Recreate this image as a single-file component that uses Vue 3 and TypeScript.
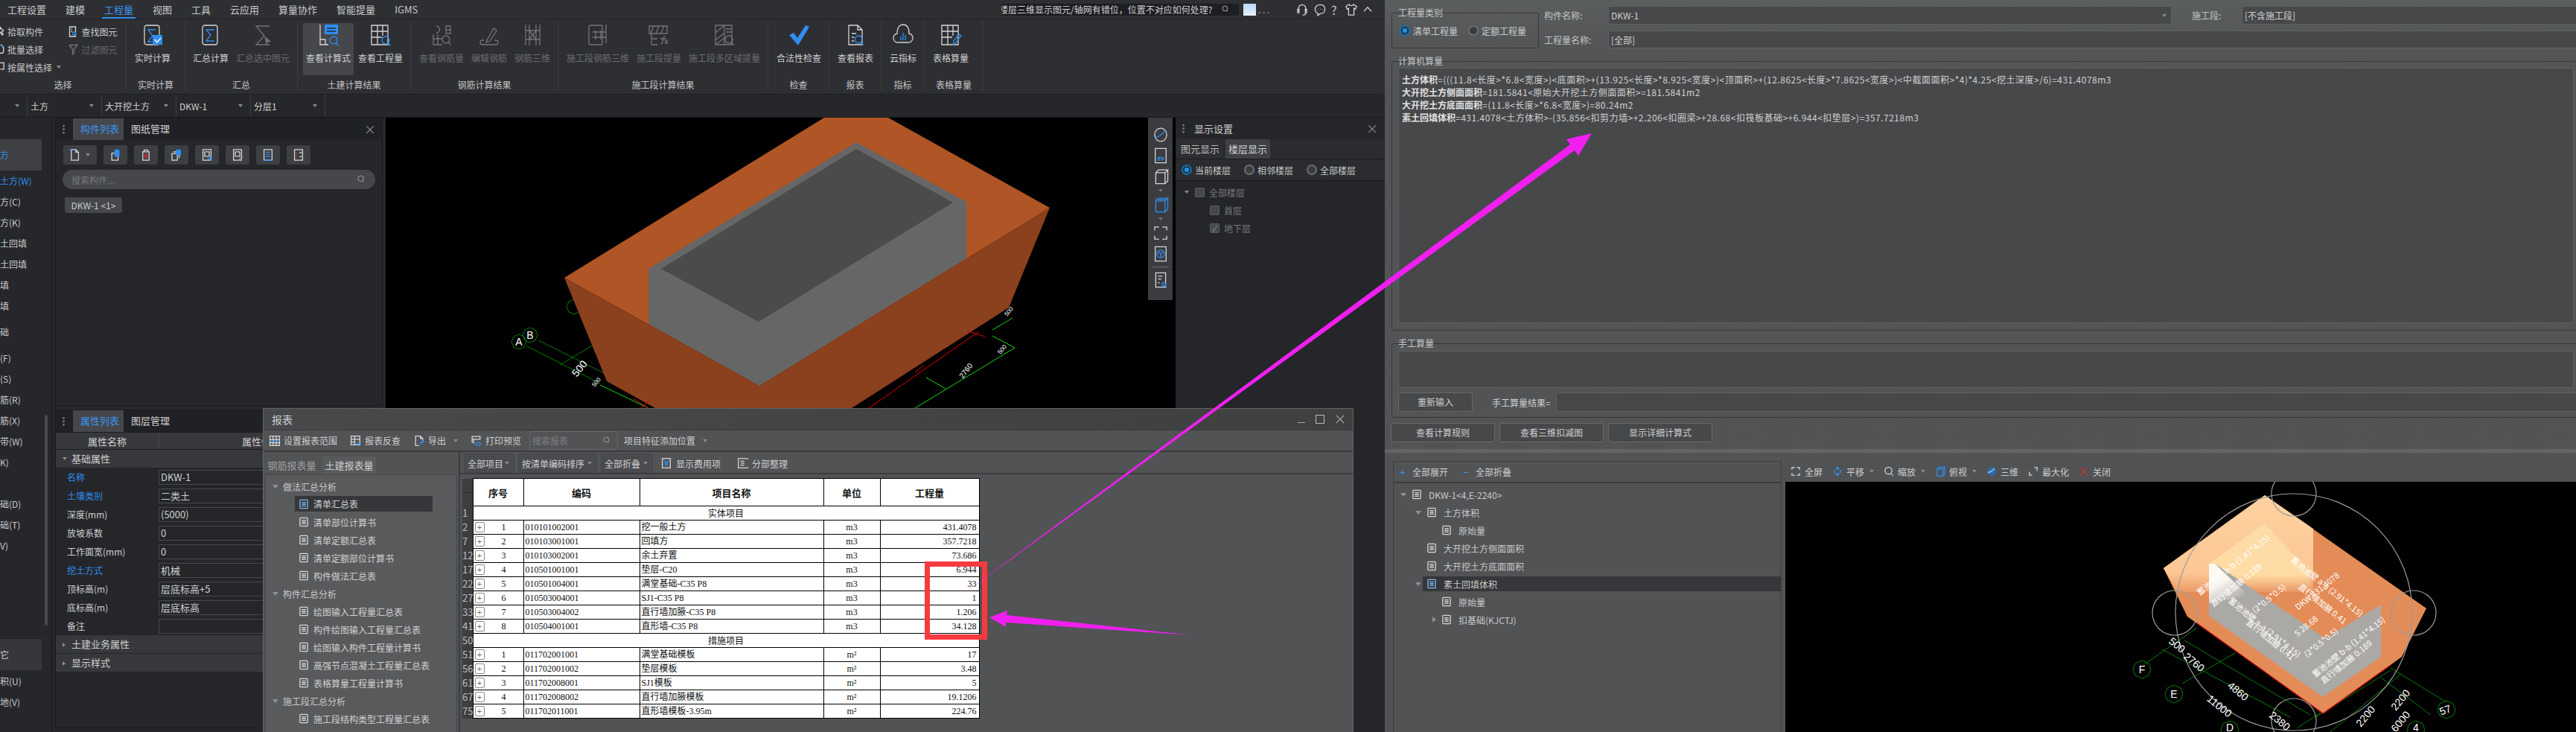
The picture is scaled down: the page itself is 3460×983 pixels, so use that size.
<template>
  <div class="page">
    <div class="app">
      <div class="menu">
        <span v-for="m in menus" :key="m" class="menu-item" :class="{ on: m === '工程量' }">{{ m }}</span>
        <div class="menu-right">
          <div class="q-search"><span>楼层三维显示图元/轴网有错位，位置不对应如何处理?</span><Ico n="search" :s="11" /></div>
          <i class="avatar"></i><span class="dots">. . .</span>
          <Ico n="headset" :s="18" /><Ico n="chat" :s="18" /><span class="help">?</span><Ico n="shirt" :s="18" /><Ico n="up" :s="14" />
        </div>
      </div>

      <div class="ribbon">
        <div class="group sel-group">
          <div class="sel-btns">
            <div class="sel-col">
              <div class="sm"><Ico class="clip" n="pick" :s="14" /><span>拾取构件</span></div>
              <div class="sm"><Ico class="clip" n="batch" :s="14" /><span>批量选择</span></div>
              <div class="sm"><Ico class="clip" n="attr" :s="14" /><span>按属性选择</span><i class="caret"></i></div>
            </div>
            <div class="sel-col second">
              <div class="sm"><Ico n="find" :s="15" /><span>查找图元</span></div>
              <div class="sm off"><Ico n="filter" :s="15" /><span>过滤图元</span></div>
            </div>
          </div>
          <div class="group-label">选择</div>
        </div>
        <div v-for="g in groups" :key="g.label" class="group" :style="{ width: g.w + 'px' }">
          <div class="btns" :style="{ paddingLeft: g.pad + 'px' }">
            <div v-for="b in g.items" :key="b.t" class="big" :class="{ off: b.off, active: b.active }" :style="{ width: b.w + 'px' }">
              <Ico :n="b.i" :s="30" />
              <span>{{ b.t }}</span>
            </div>
          </div>
          <div class="group-label">{{ g.label }}</div>
        </div>
      </div>

      <div class="subbar">
        <div class="drop first"><i class="caret"></i></div>
        <div class="drop"><span>土方</span><i class="caret"></i></div>
        <div class="drop"><span>大开挖土方</span><i class="caret"></i></div>
        <div class="drop"><span>DKW-1</span><i class="caret"></i></div>
        <div class="drop"><span>分层1</span><i class="caret"></i></div>
      </div>

      <div class="work">
        <div class="nav">
          <div v-for="(n, i) in navItems" :key="i" class="nav-row" :class="n.c">{{ n.t }}</div>
          <i class="nav-scroll"></i>
        </div>

        <div class="mid">
          <div class="panel list-panel">
            <div class="tabs">
              <i class="grip"></i>
              <span class="tab on">构件列表</span><span class="tab">图纸管理</span>
              <span class="close">×</span>
            </div>
            <div class="tools">
              <div class="tool wide"><Ico n="newdoc" :s="18" /><i class="caret"></i></div>
              <div v-for="t in listTools" :key="t" class="tool"><Ico :n="t" :s="18" /></div>
            </div>
            <div class="list-search"><span>搜索构件...</span><Ico n="search" :s="12" /></div>
            <div class="chip">DKW-1 &lt;1&gt;</div>
          </div>
          <div class="panel prop-panel">
            <div class="tabs">
              <i class="grip"></i>
              <span class="tab on">属性列表</span><span class="tab">图层管理</span>
            </div>
            <div class="prop-head"><span class="prop-name">属性名称</span><span class="prop-val">属性值</span></div>
            <div class="prop-sec"><i class="caret"></i>基础属性</div>
            <div v-for="p in props" :key="p.k" class="prop-row">
              <span class="prop-k" :class="{ blue: p.blue }">{{ p.k }}</span>
              <span class="prop-v">{{ p.v }}</span>
            </div>
            <div class="prop-sec closed"><i class="caret r"></i>土建业务属性</div>
            <div class="prop-sec closed"><i class="caret r"></i>显示样式</div>
          </div>
        </div>

        <div class="center">
          <div class="canvas">
            <svg class="scene" width="1061" height="390" viewBox="517 158 1061 390">
              <g fill="none" stroke="#0a7a0a">
                <path d="M696 449l7 3 3 7-3 7-7 3-7-3-3-7 3-7z" />
                <path d="M711 440l7 3 3 7-3 7-7 3-7-3-3-7 3-7z" />
                <path d="M722 457L814 503M707 465L805 515M751 490L796 463" />
                <path d="M770 402l7 3 3 7-3 7-7 3-7-3-3-7 3-7z" />
              </g>
              <path d="M757 373L814 512 879 548H1143L1354 413 1409 279 1019 518z" fill="#8b401e" />
              <path d="M757 373L1106 158H1192L1409 279 1019 518z" fill="#b05525" />
              <path d="M870 361L1149 191 1297 271V347L1019 518 870 435z" fill="#666" />
              <path d="M887 361L1149 200 1279 272 1018 432z" fill="#4b4b4b" />
              <g fill="#fff" font-family="Liberation Sans, sans-serif">
                <text x="696" y="464" font-size="14" text-anchor="middle">A</text>
                <text x="711" y="455" font-size="14" text-anchor="middle">B</text>
                <text x="781" y="498" font-size="14" text-anchor="middle" transform="rotate(-50 781 498)">500</text>
                <text x="802" y="515" font-size="8" text-anchor="middle" transform="rotate(-50 802 515)">500</text>
                <text x="1299" y="500" font-size="10" text-anchor="middle" transform="rotate(-52 1299 500)">2760</text>
                <text x="1356" y="420" font-size="8" text-anchor="middle" transform="rotate(-50 1356 420)">500</text>
                <text x="1347" y="471" font-size="8" text-anchor="middle" transform="rotate(-50 1347 471)">500</text>
              </g>
              <g fill="none">
                <path d="M805 517L870 548M1359 427L1332 443M1332 451L1362 467 1228 548M1243 507L1269 522" stroke="#16d916" />
                <path d="M1314 445L1166 548M1228 500L1240 490M1300 445L1322 452" stroke="#e00000" />
                <path d="M849 535L870 548M860 548L872 537" stroke="#e00000" />
              </g>
            </svg>
            <div class="strip">
              <Ico n="sphere" :s="22" /><Ico n="two" :s="22" /><Ico n="cube" :s="22" />
              <i class="caret down"></i><Ico n="cubeb" :s="22" /><i class="caret down"></i>
              <Ico n="corners" :s="22" /><Ico n="focus" :s="22" /><i class="strip-line"></i><Ico n="docset" :s="22" />
            </div>
          </div>
        </div>

        <div class="settings">
          <div class="tabs plain">
            <i class="grip"></i>
            <span class="set-title">显示设置</span>
            <span class="close">×</span>
          </div>
          <div class="set-tabs">
            <span class="set-tab">图元显示</span><span class="set-tab on">楼层显示</span>
          </div>
          <div class="set-radios">
            <label class="radio on"><i></i>当前楼层</label>
            <label class="radio"><i></i>相邻楼层</label>
            <label class="radio"><i></i>全部楼层</label>
          </div>
          <div class="set-tree">
            <div class="floor"><i class="caret"></i><i class="box"></i>全部楼层</div>
            <div class="floor l2"><i class="box"></i>首层</div>
            <div class="floor l2"><i class="box checked">✓</i>地下层</div>
          </div>
        </div>
      </div>
    </div>

    <div class="dlg">
      <div class="dlg-top">
        <div class="gbox kind">
          <span class="legend">工程量类别</span>
          <label class="radio on"><i></i>清单工程量</label>
          <label class="radio"><i></i>定额工程量</label>
        </div>
        <div class="fields">
          <div class="field-row">
            <span class="f-label">构件名称:</span>
            <div class="f-input name">DKW-1<i class="caret"></i></div>
            <span class="f-label sec">施工段:</span>
            <div class="f-input grow">[不含施工段]</div>
          </div>
          <div class="field-row second">
            <span class="f-label">工程量名称:</span>
            <div class="f-input grow">[全部]</div>
          </div>
        </div>
      </div>

      <div class="gbox calc">
        <span class="legend">计算机算量</span>
        <div class="calc-text">
          <p><b>土方体积</b>=(((11.8&lt;长度&gt;*6.8&lt;宽度&gt;)&lt;底面积&gt;+(13.925&lt;长度&gt;*8.925&lt;宽度&gt;)&lt;顶面积&gt;+(12.8625&lt;长度&gt;*7.8625&lt;宽度&gt;)&lt;中截面面积&gt;*4)*4.25&lt;挖土深度&gt;/6)=431.4078m3</p>
          <p><b>大开挖土方侧面面积</b>=181.5841&lt;原始大开挖土方侧面面积&gt;=181.5841m2</p>
          <p><b>大开挖土方底面面积</b>=(11.8&lt;长度&gt;*6.8&lt;宽度&gt;)=80.24m2</p>
          <p><b>素土回填体积</b>=431.4078&lt;土方体积&gt;-(35.856&lt;扣剪力墙&gt;+2.206&lt;扣圈梁&gt;+28.68&lt;扣筏板基础&gt;+6.944&lt;扣垫层&gt;)=357.7218m3</p>
        </div>
      </div>

      <div class="gbox manual">
        <span class="legend">手工算量</span>
        <div class="manual-box"></div>
        <div class="manual-row">
          <div class="btn first">重新输入</div>
          <span class="manual-label">手工算量结果=</span>
          <div class="f-input grow"></div>
        </div>
      </div>

      <div class="dlg-btns">
        <div class="btn">查看计算规则</div><div class="btn">查看三维扣减图</div><div class="btn">显示详细计算式</div>
      </div>
      <div class="dlg-sep"></div>

      <div class="dlg-bottom">
        <div class="qty-tree">
          <div class="qty-tools">
            <span class="qt"><em class="plus-mark">+</em>全部展开</span>
            <span class="qt"><em class="plus-mark">−</em>全部折叠</span>
          </div>
          <div class="qty-rows">
            <div v-for="r in qtyRows" :key="r.t + r.l" class="qty-row" :class="{ sel: r.sel }" :style="{ paddingLeft: r.l * 20 + 'px' }">
              <i class="arrow" :class="r.a"></i>
              <Ico :n="r.sel ? 'docb' : 'doc'" :s="14" />
              <span>{{ r.t }}</span>
            </div>
          </div>
        </div>
        <div class="view">
          <div class="view-tools">
            <span class="vt"><Ico n="corners" :s="14" />全屏</span>
            <span class="vt"><Ico n="pan" :s="14" />平移<i class="caret"></i></span>
            <span class="vt"><Ico n="zoom" :s="14" />缩放<i class="caret"></i></span>
            <span class="vt"><Ico n="cubeb" :s="14" />俯视<i class="caret"></i></span>
            <span class="vt"><Ico n="globe" :s="14" />三维</span>
            <span class="vt"><Ico n="max" :s="14" />最大化</span>
            <span class="vt"><Ico n="x" :s="14" />关闭</span>
          </div>
          <svg class="model" width="1062" height="336" viewBox="2398 647 1062 336">
            <defs>
              <linearGradient id="peach" x1="0" y1="0" x2="0" y2="1">
                <stop offset="0" stop-color="#fdd2a0" />
                <stop offset="0.8" stop-color="#fcc795" />
                <stop offset="1" stop-color="#ec9a66" />
              </linearGradient>
              <linearGradient id="cream" x1="0" y1="0" x2="0" y2="1">
                <stop offset="0" stop-color="#fedcaa" />
                <stop offset="0.75" stop-color="#ffdca4" />
                <stop offset="1" stop-color="#e99564" />
              </linearGradient>
              <linearGradient id="shine" x1="0" y1="0" x2="0.6" y2="1">
                <stop offset="0" stop-color="#fffdf0" />
                <stop offset="0.5" stop-color="#f8f6ee" />
                <stop offset="1" stop-color="#aba9a6" />
              </linearGradient>
            </defs>
            <g stroke="#0f7a0f" fill="none">
              <path d="M2879 893L2951 843M2931 918L3002 877M2904 872L3076 963M2934 860L3103 960M3211 897L3286 943M3198 910L3265 960M3110 963L3211 900M3085 978L3150 935M3130 983L3225 905" />
              <path d="M2877 887l9 4 3 8-3 8-9 4-9-4-3-8 3-8z" />
              <path d="M2920 920l9 4 3 8-3 8-9 4-9-4-3-8 3-8z" />
              <path d="M2995 968l9 4 3 8-3 8-9 4-9-4-3-8 3-8z" />
              <path d="M3286 941l9 4 3 8-3 8-9 4-9-4-3-8 3-8z" />
              <path d="M3245 968l9 4 3 8-3 8-9 4-9-4-3-8 3-8z" />
            </g>
            <path d="M3042 665L2906 763 2938 828 3121 958 3226 882 3259 817z" fill="#e48c57" />
            <path d="M3042 665L2906 763 2924 795H3107V710z" fill="url(#peach)" />
            <path d="M3042 703L2967 757V795H3102V768z" fill="url(#cream)" />
            <path d="M2951 837L3120 958 3211 893" fill="none" stroke="#d11" stroke-width="1.2" />
            <path d="M2967 757H2975L3123 857 3198 812V882L3120 936 2967 827z" fill="#aba9a6" />
            <path d="M2967 757H2975L3020 800 2967 810z" fill="url(#shine)" />
            <g fill="none" stroke="#9b9b9b" stroke-width="1.2">
              <circle cx="3081" cy="822" r="159" />
              <circle cx="3081" cy="663" r="30" />
              <circle cx="2921" cy="823" r="30" />
              <circle cx="3242" cy="823" r="30" />
              <circle cx="3081" cy="968" r="30" />
            </g>
            <g fill="#fff" font-size="11" text-anchor="middle" font-family="Noto Sans CJK SC, sans-serif">
              <text v-for="(m, i) in modelLabels" :key="i" :x="m.x" :y="m.y" :transform="`rotate(${m.r} ${m.x} ${m.y})`">{{ m.t }}</text>
            </g>
            <g fill="#fff" font-size="14" text-anchor="middle" font-family="Liberation Sans, sans-serif">
              <text v-for="(m, i) in gridLabels" :key="i" :x="m.x" :y="m.y" :transform="`rotate(${m.r} ${m.x} ${m.y})`">{{ m.t }}</text>
            </g>
          </svg>
        </div>
      </div>
    </div>

    <div class="report">
      <div class="rp-title">
        <span>报表</span>
        <div class="win"><i class="w-min"></i><i class="w-max"></i><Ico n="x2" :s="14" /></div>
      </div>
      <div class="rp-tools">
        <span class="rt"><Ico n="range" :s="16" />设置报表范围</span>
        <span class="rt"><Ico n="back" :s="16" />报表反查</span>
        <span class="rt"><Ico n="export" :s="16" />导出<i class="caret"></i></span>
        <span class="rt"><Ico n="print" :s="16" />打印预览</span>
        <div class="rp-search"><span>搜索报表</span><Ico n="search" :s="11" /></div>
        <span class="rt"><span>项目特征添加位置</span><i class="caret"></i></span>
      </div>
      <div class="rp-body">
        <div class="rp-left">
          <div class="rp-tabs"><span class="rp-tab">钢筋报表量</span><span class="rp-tab on">土建报表量</span></div>
          <div class="rp-tree">
            <template v-for="s in reportTree" :key="s.t">
              <div class="rp-sec"><i class="arrow d"></i>{{ s.t }}</div>
              <div v-for="c in s.c" :key="c" class="rp-item" :class="{ sel: c === '清单汇总表' }">
                <Ico :n="c === '清单汇总表' ? 'docb' : 'doc'" :s="14" /><span>{{ c }}</span>
              </div>
            </template>
          </div>
        </div>
        <div class="rp-right">
          <div class="rp-bar">
            <div class="rb-btn w1">全部项目<i class="caret"></i></div>
            <div class="rb-btn w2">按清单编码排序<i class="caret"></i></div>
            <div class="rb-btn w3">全部折叠<i class="caret"></i></div>
            <span class="rb-link"><Ico n="yen" :s="16" />显示费用项</span>
            <span class="rb-link"><Ico n="sort" :s="16" />分部整理</span>
          </div>
          <table class="sheet">
            <colgroup>
              <col class="c0" /><col class="c1" /><col class="c2" /><col class="c3" /><col class="c4" /><col class="c5" />
            </colgroup>
            <thead>
              <tr>
                <th class="rn head"><i></i></th>
                <th>序号</th><th>编码</th><th>项目名称</th><th>单位</th><th>工程量</th>
              </tr>
            </thead>
            <tbody>
              <tr v-for="r in sheetRows" :key="r.rn">
                <td class="rn">{{ r.rn }}</td>
                <td v-if="r.sec" colspan="5" class="sec">{{ r.sec }}</td>
                <template v-else>
                  <td><div class="seq"><i class="pl">+</i><span class="num">{{ r.no }}</span></div></td>
                  <td class="num code">{{ r.code }}</td>
                  <td class="nm">{{ r.name }}</td>
                  <td class="num ctr">{{ r.unit }}</td>
                  <td class="num qty">{{ r.qty }}</td>
                </template>
              </tr>
            </tbody>
          </table>
        </div>
      </div>
    </div>

    <svg class="marks" width="3460" height="983" viewBox="0 0 3460 983">
      <rect x="1245.5" y="757.5" width="77" height="98" fill="none" stroke="#f73a3f" stroke-width="7" />
      <path d="M1289 801L2109 194 2104 187 2138 179 2120 209 2115 202z" fill="#f01ff0" />
      <path d="M1329 829L1353 820 1352 826 1601 853 1351 836 1351 842z" fill="#f01ff0" />
    </svg>
  </div>
</template>

<script setup lang="ts">
import { h } from 'vue';

type Seg = { d: string; c?: string; f?: string };

const W = '#d6d6d6';
const B = '#2f8ef0';
const G = '#737477';
const L = (d: string, c = W): Seg => ({ d, c });
const F = (d: string, f = B): Seg => ({ d, f });
const mag = (x: number, y: number, r: number, c = B): Seg =>
  L(`M${x - r} ${y}a${r} ${r} 0 1 0 ${2 * r} 0a${r} ${r} 0 1 0 ${-2 * r} 0M${x + r * 0.7} ${y + r * 0.7}l3 4`, c);
const frame = 'M7 2h14a3 3 0 0 1 3 3v20a3 3 0 0 1-3 3H7a3 3 0 0 1-3-3V5a3 3 0 0 1 3-3z';

const icons: Record<string, Seg[]> = {
  search: [mag(12, 12, 9, '#888')],
  headset: [L('M7 17v-5a8 8 0 0 1 16 0v5M5 14h3v8H5zM22 14h3v8h-3zM23 22c0 3-3 5-7 5')],
  chat: [L('M15 4c7 0 11 4 11 10s-4 10-11 10l-5 4v-5c-4-2-6-5-6-9 0-6 5-10 11-10z'), L('M10 14h1M15 14h1M20 14h1')],
  shirt: [L('M10 3L3 8l3 6 3-2v15h12V12l3 2 3-6-7-5c-1 4-9 4-10 0z')],
  up: [L('M4 20L15 8l11 12')],
  pick: [L('M16 4l9 9-5 3 4 8-3 2-4-8-5 4z')],
  batch: [L('M16 3a9 9 0 0 1 9 9v9a6 6 0 0 1-12 0v-4'), L('M22 3v8', B)],
  attr: [L('M8 3h18v18H16M8 3v10'), L('M4 18h8v9H4z', B)],
  find: [L('M5 2h16v26H5z'), L('M9 8h3M9 14h3'), mag(17, 20, 4)],
  filter: [L('M4 3h22L17 14v11M13 14L4 3M13 14v14l3-2', G)],
  sumcheck: [L(frame), L('M19 8H9l6 8-6 8h5', B), F('M15 15h13v13H15z'), L('M18 21l3 4 5-6', '#fff')],
  sum: [L(frame), L('M20 8H9l6 7-6 8h11', B)],
  sumsel: [L('M24 3H6l11 13-11 12h18', G), F('M17 16l9 8-5 1-1 4z', G)],
  calc: [L('M4 1v27h11'), L('M4 21h7v7'), F('M10 1h18v13H10z'), L('M13 6h12M13 10h12', '#1e2b3a'), mag(22, 22, 5)],
  grid: [L('M3 2h22v26H3zM3 10h22M3 18h14M11 2v26M18 2v14M25 2v14'), mag(22, 22, 5)],
  steel: [L('M4 14v14h12M4 20h12M10 14v14M21 3h6v10h-6zM21 8h6M8 3a3 3 0 1 1 0 9', G), mag(21, 21, 5, G)],
  edit: [L('M8 22H6a2.500 2.500 0 0 0 0 6h18a2.500 2.500 0 0 0 0-6h-2M12 22l9-16 4 3-9 14-5 2z', G)],
  rebar: [L('M6 1v28M11 1v28M20 1v28M25 1v28M6 9h19M6 21h19M11 9l9 12M20 9l-9 12', G)],
  sec3d: [L('M5 2h14a2 2 0 0 1 2 2v22a2 2 0 0 1-2 2H5a2 2 0 0 1-2-2V4a2 2 0 0 1 2-2zM8 11h18M8 18h18M12 9v12M19 9v12M26 1v25', G)],
  secqty: [L('M2 3h24v10H2zM8 3L4 13M15 3l-4 10M22 3l-4 10M5 13v15M5 20h8M5 28h8', G), L('M18 27c3 0 2-10 5-10M17 20h8M23 22l4 5M27 22l-4 5', G)],
  secarea: [L('M3 2h22v26H3zM3 12L15 2M3 22L15 12M3 28l12-9M15 2v26M17 7h7M17 11h7', G), mag(21, 21, 5, G)],
  check: [F('M2 15l6-3 5 7L24 2l5 2-15 25z')],
  report: [L('M6 2h12l6 6v20H6zM18 2v6h6M10 13h6M10 18h3M10 23h3'), mag(19, 21, 5)],
  cloud: [L('M9 25a6 6 0 0 1-2-12c0-9 4-12 8-12s8 3 8 12a6 6 0 0 1-2 12z'), L('M12 22v-5M15 22V12M18 22v-7', B)],
  tablepen: [L('M3 2h22v26H3zM3 10h22M3 18h14M11 2v26M18 2v14M3 28h10'), L('M18 28l1-5 7-9 3 2-7 9z', B)],
  newdoc: [L('M8 3h10l6 6v18H8zM18 3v6h6'), F('M4 2h4v4H4z')],
  copy: [L('M7 11h14v16H7z'), F('M13 3h11v16H13z')],
  del: [L('M8 8h14v19H8zM6 8h18M11 8V4h8v4'), L('M13 12v11M17 12v11', '#d33')],
  dup: [L('M5 12h12v15H5zM9 8h3M9 5'), L('M9 8h12v14', W), F('M14 3h11v13H14z')],
  fq: [L('M6 3h18v24H6zM10 8h10M10 8v10h10V8'), mag(20, 22, 3)],
  fe: [L('M6 3h18v24H6zM10 8h10M10 8v10h10V8'), L('M18 26l6-7 2 2-6 7z', '#999')],
  list: [L('M6 3h18v24H6z'), L('M10 9h10M10 14h8M10 19h10M5 27h20', B)],
  red: [L('M6 3h18v24H6z'), L('M17 10h5M17 19h5'), L('M10 9v3M10 17v3', '#d33')],
  sphere: [L('M15 3c7 0 11 6 11 12s-4 12-11 12S4 21 4 15 8 3 15 3z'), L('M5 20c6-1 14-7 19-14', B)],
  two: [L('M5 2h20v26H5z'), L('M10 18h4v2h-4v3h4M17 18v5h1a2 2 0 0 0 0-5z', B)],
  cube: [L('M6 8h17v20H6zM6 8l5-5h17l-5 5M23 28l5-5V3')],
  cubeb: [L('M6 8h17v20H6zM6 8l5-5h17l-5 5M23 28l5-5V3', B), F('M6 3h22l-5 5H6z', '#3a6ea8')],
  corners: [L('M4 10V4h8M18 4h8v6M26 20v6h-8M12 26H4v-6')],
  focus: [L('M5 2h20v26H5z'), L('M15 8a7 7 0 1 1 0 14 7 7 0 0 1 0-14zM15 15v7M15 15l-5-4M15 15l5-4', B)],
  docset: [L('M6 2h18v26H6zM10 8h8M10 13h6M10 20h3'), mag(21, 23, 3)],
  doc: [L('M6 3h18a2 2 0 0 1 2 2v20a2 2 0 0 1-2 2H6a2 2 0 0 1-2-2V5a2 2 0 0 1 2-2zM9 10h12M9 15h12M9 20h12')],
  docb: [L('M6 3h18a2 2 0 0 1 2 2v20a2 2 0 0 1-2 2H6a2 2 0 0 1-2-2V5a2 2 0 0 1 2-2zM9 10h12M9 15h12M9 20h12', '#7fb8ee')],
  pan: [L('M15 3l-4 5h8zM15 27l-4-5h8zM6 10v10M24 10v10', B)],
  zoom: [L('M4 13a10 10 0 1 0 20 0a10 10 0 1 0-20 0M21 21l6 7', '#cfcfcf')],
  globe: [F('M15 3a12 12 0 1 1 0 24 12 12 0 0 1 0-24z', '#2a6cb3'), L('M4 18c7 0 16-6 20-12', '#9cc7f0')],
  max: [L('M4 16v10h8M18 4h8v10')],
  x: [L('M5 3l20 24M25 3L5 27', '#c93535')],
  x2: [L('M4 4l22 22M26 4L4 26', '#a8a8a8')],
  range: [L('M3 3h24v24H3zM3 12h24M3 20h24M11 3v24M19 3v24'), L('M3 16h24', B)],
  back: [L('M3 3h22v22H3zM3 11h22M12 3v22M3 18h9'), L('M28 22H17l3-3M17 22l3 3', B)],
  export: [L('M14 27H6V3h12l6 6v6M18 3v6h6'), L('M16 24c1-5 4-7 9-7M22 13l4 4-4 4', B)],
  print: [L('M4 4h20v7H4zM8 11v11M4 11v9M20 11h5'), L('M13 23a6 4 0 1 0 12 0a6 4 0 1 0-12 0', B)],
  yen: [L('M5 3h20v24H5z'), L('M10 8l5 7 5-7M15 15v8M11 15h8M11 19h8', B)],
  sort: [L('M5 3h20a2 2 0 0 1 0 24H5zM10 10h10M12 15h8M10 20h10', '#d0d0d0')],
};

const Ico = (p: { n: string; s?: number }) => {
  const s = p.s ?? 16;
  return h('svg', { width: s, height: s, viewBox: '0 0 30 30', style: 'flex:none;display:block' },
    (icons[p.n] ?? []).map((seg) =>
      h('path', {
        d: seg.d,
        fill: seg.f ?? 'none',
        stroke: seg.c ?? 'none',
        'stroke-width': 1.3,
        'vector-effect': 'non-scaling-stroke',
      })));
};
Ico.props = ['n', 's'];

const menus = ['工程设置', '建模', '工程量', '视图', '工具', '云应用', '算量协作', '智能提量', 'IGMS'];

const groups = [
  { label: '实时计算', w: 79, pad: 0, items: [{ t: '实时计算', w: 70, i: 'sumcheck' }] },
  { label: '汇总', w: 151, pad: 0, items: [{ t: '汇总计算', w: 68, i: 'sum' }, { t: '汇总选中图元', w: 72, i: 'sumsel', off: true }] },
  { label: '土建计算结果', w: 152, pad: 7, items: [{ t: '查看计算式', w: 68, i: 'calc', active: true }, { t: '查看工程量', w: 72, i: 'grid' }] },
  { label: '钢筋计算结果', w: 198, pad: 8, items: [{ t: '查看钢筋量', w: 66, i: 'steel', off: true }, { t: '编辑钢筋', w: 62, i: 'edit', off: true }, { t: '钢筋三维', w: 54, i: 'rebar', off: true }] },
  { label: '施工段计算结果', w: 282, pad: 5, items: [{ t: '施工段钢筋三维', w: 96, i: 'sec3d', off: true }, { t: '施工段提量', w: 68, i: 'secqty', off: true }, { t: '施工段多区域提量', w: 108, i: 'secarea', off: true }] },
  { label: '检查', w: 82, pad: 0, items: [{ t: '合法性检查', w: 82, i: 'check' }] },
  { label: '报表', w: 70, pad: 0, items: [{ t: '查看报表', w: 70, i: 'report' }] },
  { label: '指标', w: 58, pad: 0, items: [{ t: '云指标', w: 58, i: 'cloud' }] },
  { label: '表格算量', w: 79, pad: 0, items: [{ t: '表格算量', w: 70, i: 'tablepen' }] },
];

// the reference is cropped at its left edge, so only these ends of the names show
const navItems = [
  { t: '方', c: 'sec cur' }, { t: '土方(W)', c: 'blue' }, { t: '方(C)', c: '' }, { t: '方(K)', c: '' },
  { t: '土回填', c: '' }, { t: '土回填', c: '' }, { t: '填', c: '' }, { t: '填', c: '' },
  { t: '础', c: 'sec' }, { t: '(F)', c: '' }, { t: '(S)', c: '' }, { t: '筋(R)', c: '' }, { t: '筋(X)', c: '' },
  { t: '带(W)', c: '' }, { t: 'K)', c: '' }, { t: '', c: '' }, { t: '础(D)', c: '' }, { t: '础(T)', c: '' },
  { t: 'V)', c: '' }, { t: '', c: 'gap' }, { t: '它', c: 'sec other' }, { t: '积(U)', c: '' }, { t: '地(V)', c: '' },
];

const listTools = ['copy', 'del', 'dup', 'fq', 'fe', 'list', 'red'];

const props = [
  { k: '名称', v: 'DKW-1', blue: true },
  { k: '土壤类别', v: '二类土', blue: true },
  { k: '深度(mm)', v: '(5000)' },
  { k: '放坡系数', v: '0' },
  { k: '工作面宽(mm)', v: '0' },
  { k: '挖土方式', v: '机械', blue: true },
  { k: '顶标高(m)', v: '层底标高+5' },
  { k: '底标高(m)', v: '层底标高' },
  { k: '备注', v: '' },
];

const qtyRows = [
  { t: 'DKW-1<4,E-2240>', l: 0, a: 'd' },
  { t: '土方体积', l: 1, a: 'd' },
  { t: '原始量', l: 2, a: '' },
  { t: '大开挖土方侧面面积', l: 1, a: '' },
  { t: '大开挖土方底面面积', l: 1, a: '' },
  { t: '素土回填体积', l: 1, a: 'd', sel: true },
  { t: '原始量', l: 2, a: '' },
  { t: '扣基础(KJCTJ)', l: 2, a: 'r' },
];

const modelLabels = [
  { t: '蓄池池壁 b-b (1.41*4.15)', x: 3002, y: 762, r: -39 },
  { t: '直行墙加腋 0.189', x: 3006, y: 789, r: -39 },
  { t: '蓄池池壁 a-a (2.91*4.15)', x: 3123, y: 791, r: 39 },
  { t: '直行墙加腋 0.41', x: 3117, y: 814, r: 39 },
  { t: 'DKW 431.4078', x: 3115, y: 797, r: -39 },
  { t: '蓄池池壁 a-a (2.91*4.15)', x: 3039, y: 846, r: 39 },
  { t: '直行墙加腋 0.41', x: 3047, y: 862, r: 39 },
  { t: '(2*0.5*0.5)', x: 3050, y: 807, r: -39 },
  { t: '(2*0.5*0.5)', x: 3120, y: 866, r: -39 },
  { t: '蓄池池壁 b-b (1.41*4.15)', x: 3157, y: 872, r: -39 },
  { t: '直行墙加腋 0.189', x: 3154, y: 892, r: -39 },
  { t: 'S 28.68', x: 3100, y: 844, r: -39 },
];

const gridLabels = [
  { t: '500', x: 2921, y: 870, r: 39 },
  { t: '2760', x: 2944, y: 893, r: 39 },
  { t: '4860', x: 3003, y: 932, r: 39 },
  { t: '11000', x: 2978, y: 952, r: 39 },
  { t: '2380', x: 3059, y: 972, r: 39 },
  { t: '2200', x: 3181, y: 965, r: -50 },
  { t: '2200', x: 3228, y: 943, r: -50 },
  { t: '6000', x: 3228, y: 972, r: -50 },
  { t: 'F', x: 2877, y: 904, r: 0 },
  { t: 'E', x: 2920, y: 937, r: 0 },
  { t: 'D', x: 2995, y: 982, r: 0 },
  { t: '57', x: 3286, y: 958, r: -20 },
  { t: '4', x: 3245, y: 982, r: 0 },
];

const reportTree = [
  { t: '做法汇总分析', c: ['清单汇总表', '清单部位计算书', '清单定额汇总表', '清单定额部位计算书', '构件做法汇总表'] },
  { t: '构件汇总分析', c: ['绘图输入工程量汇总表', '构件绘图输入工程量汇总表', '绘图输入构件工程量计算书', '高强节点混凝土工程量汇总表', '表格算量工程量计算书'] },
  { t: '施工段汇总分析', c: ['施工段结构类型工程量汇总表'] },
];

type SheetRow = { rn: number; sec?: string; no?: number; code?: string; name?: string; unit?: string; qty?: string };

const sheetRows: SheetRow[] = [
  { rn: 1, sec: '实体项目' },
  { rn: 2, no: 1, code: '010101002001', name: '挖一般土方', unit: 'm3', qty: '431.4078' },
  { rn: 7, no: 2, code: '010103001001', name: '回填方', unit: 'm3', qty: '357.7218' },
  { rn: 12, no: 3, code: '010103002001', name: '余土弃置', unit: 'm3', qty: '73.686' },
  { rn: 17, no: 4, code: '010501001001', name: '垫层-C20', unit: 'm3', qty: '6.944' },
  { rn: 22, no: 5, code: '010501004001', name: '满堂基础-C35 P8', unit: 'm3', qty: '33' },
  { rn: 27, no: 6, code: '010503004001', name: 'SJ1-C35 P8', unit: 'm3', qty: '1' },
  { rn: 33, no: 7, code: '010503004002', name: '直行墙加腋-C35 P8', unit: 'm3', qty: '1.206' },
  { rn: 41, no: 8, code: '010504001001', name: '直形墙-C35 P8', unit: 'm3', qty: '34.128' },
  { rn: 50, sec: '措施项目' },
  { rn: 51, no: 1, code: '011702001001', name: '满堂基础模板', unit: 'm²', qty: '17' },
  { rn: 56, no: 2, code: '011702001002', name: '垫层模板', unit: 'm²', qty: '3.48' },
  { rn: 61, no: 3, code: '011702008001', name: 'SJ1模板', unit: 'm²', qty: '5' },
  { rn: 67, no: 4, code: '011702008002', name: '直行墙加腋模板', unit: 'm²', qty: '19.1206' },
  { rn: 75, no: 5, code: '011702011001', name: '直形墙模板-3.95m', unit: 'm²', qty: '224.76' },
];
</script>

<style>
html, body { margin: 0; background: #26272a; }
</style>

<style scoped>
.page {
  position: relative;
  width: 3460px;
  height: 983px;
  overflow: hidden;
  display: flex;
  font: 12px "Noto Sans CJK SC", sans-serif;
  color: #cfcfcf;
  background: #26272a;
}
.caret {
  display: inline-block;
  width: 0;
  height: 0;
  border-left: 3px solid transparent;
  border-right: 3px solid transparent;
  border-top: 4px solid #8a8a8a;
}
.caret.r { border: 0; border-top: 3px solid transparent; border-bottom: 3px solid transparent; border-left: 4px solid #8a8a8a; }
.arrow { flex: none; width: 8px; height: 8px; display: block; }
.arrow.d { border-left: 4px solid transparent; border-right: 4px solid transparent; border-top: 5px solid #8f8f8f; width: 0; height: 0; }
.arrow.r { border-top: 4px solid transparent; border-bottom: 4px solid transparent; border-left: 5px solid #8f8f8f; width: 0; height: 0; margin-left: 3px; }

/* left application */
.app { width: 1860px; flex: none; display: flex; flex-direction: column; }
.menu {
  height: 25px;
  display: flex;
  align-items: center;
  gap: 26px;
  padding-left: 10px;
  background: #2e2f33;
  font-size: 13px;
  border-bottom: 1px solid #24252a;
}
.menu-item { color: #c9c9c9; height: 25px; line-height: 25px; position: relative; }
.menu-item.on { color: #3a94f2; }
.menu-item.on::after { content: ""; position: absolute; left: -3px; right: -3px; bottom: 0; height: 2px; background: #2f8ef0; }
.menu-right { margin-left: auto; width: 515px; display: flex; align-items: center; font-size: 12px; }
.q-search {
  width: 319px;
  height: 16px;
  box-sizing: border-box;
  background: #1d1e21;
  border-radius: 2px;
  display: flex;
  align-items: center;
  justify-content: space-between;
  padding-right: 6px;
  overflow: hidden;
  white-space: nowrap;
  color: #d0d0d0;
}
.q-search span { margin-left: -3px; }
.avatar { width: 17px; height: 16px; margin-left: 6px; background: linear-gradient(#b8d8f6, #e8f2fb); }
.dots { width: 26px; margin-left: 3px; margin-right: 24px; color: #aaa; white-space: nowrap; font-size: 12px; }
.menu-right svg { margin-right: 6px; }
.help { width: 18px; font-size: 16px; color: #ccc; }

.ribbon { height: 101px; display: flex; background: #2e2f33; border-bottom: 1px solid #1c1d20; box-sizing: border-box; }
.group { flex: none; display: flex; flex-direction: column; border-right: 1px solid #3b3c40; margin: 2px 0 4px; box-sizing: border-box; height: 94px; }
.sel-group { width: 170px; }
.group-label { margin-top: auto; height: 16px; line-height: 16px; text-align: center; color: #c4c4c4; }
.sel-btns { display: flex; padding-left: 10px; }
.sel-col { width: 82px; padding-top: 2px; }
.sel-col.second { width: 78px; }
.sm { height: 24px; display: flex; align-items: center; gap: 3px; white-space: nowrap; color: #c9c9c9; }
.sm .caret { margin-left: 3px; }
.sm .clip { margin-left: -17px; }
.sm.off { color: #66676a; }
.btns { display: flex; }
.big {
  flex: none;
  height: 70px;
  box-sizing: border-box;
  padding-top: 1px;
  margin-top: 3px;
  display: flex;
  flex-direction: column;
  align-items: center;
  gap: 7px;
  white-space: nowrap;
  color: #d0d0d0;
  border-radius: 3px;
}
.big.off { color: #6a6b6e; }
.big.active { background: #45474b; }

.subbar { height: 30px; display: flex; background: #26272a; border-bottom: 1px solid #1a1b1d; }
.drop {
  width: 100px;
  flex: none;
  box-sizing: border-box;
  padding: 0 10px 0 4px;
  display: flex;
  align-items: center;
  justify-content: space-between;
  border-right: 1px solid #3d3e42;
  font-size: 12px;
  white-space: nowrap;
}
.drop.first { width: 37px; justify-content: flex-end; }

.work { flex: 1; min-height: 0; display: flex; background: #26272a; }
.nav { position: relative; width: 69px; flex: none; background: #26272a; overflow: hidden; border-right: 1px solid #1a1b1d; padding-top: 29px; box-sizing: border-box; width: 70px; }
.nav-row { height: 28px; line-height: 28px; white-space: nowrap; color: #c9c9c9; }
.nav-row.sec { height: 42px; line-height: 42px; }
.nav-row.cur { width: 56px; background: #3e4043; color: #2f8ef0; }
.nav-row.other { width: 56px; background: #36373a; margin-bottom: 1px; }
.nav-row.blue { color: #2f8ef0; }
.nav-row.gap { height: 111px; }
.nav-scroll { position: absolute; left: 60px; top: 399px; width: 4px; height: 283px; background: #4a4b4f; border-radius: 2px; }

.mid { width: 440px; flex: none; margin-left: 4px; display: flex; flex-direction: column; gap: 5px; }
.panel { background: #25262a; border: 1px solid #1a1b1d; box-sizing: border-box; }
.list-panel { height: 387px; }
.prop-panel { flex: 1; min-height: 0; margin-bottom: 5px; }
.tabs { height: 29px; display: flex; align-items: stretch; position: relative; background: #202124; padding-left: 8px; }
.tabs.plain { align-items: center; background: #25262a; }
.grip { width: 5px; margin: 8px 10px 8px 0; flex: none; align-self: stretch; background: radial-gradient(circle, #777 1.2px, transparent 1.5px) 0 0 / 5px 4.5px; }
.tab { padding: 0 10px; line-height: 28px; font-size: 13px; color: #cfcfcf; white-space: nowrap; width: 68px; box-sizing: border-box; }
.tab.on { background: #45474b; color: #3a94f2; }
.close { position: absolute; right: 8px; top: 4px; color: #888; font-size: 16px; line-height: 20px; }
.tools { display: flex; gap: 9px; padding: 7px 0 0 10px; height: 26px; }
.tool { width: 32px; height: 26px; display: flex; align-items: center; justify-content: center; background: #3d3f43; border-radius: 3px; }
.tool.wide { width: 45px; justify-content: flex-start; padding-left: 6px; box-sizing: border-box; gap: 6px; }
.list-search {
  margin: 7px 9px 0 9px;
  height: 26px;
  padding: 0 12px;
  border-radius: 13px;
  background: #45474b;
  color: #78797c;
  display: flex;
  align-items: center;
  justify-content: space-between;
}
.chip { margin: 11px 0 0 12px; width: 77px; height: 21px; line-height: 21px; text-align: center; border-radius: 3px; background: #45474b; color: #ccc; white-space: nowrap; font-size: 12px; }
.prop-head { height: 24px; line-height: 24px; display: flex; background: #37383b; border-top: 1px solid #1a1b1d; border-bottom: 1px solid #1a1b1d; box-sizing: border-box; font-size: 13px; }
.prop-name { width: 138px; text-align: center; border-right: 1px solid #47484b; }
.prop-val { padding-left: 111px; }
.prop-sec { height: 24px; line-height: 24px; padding-left: 21px; background: #37383b; position: relative; font-size: 13px; }
.prop-sec .caret { position: absolute; left: 9px; top: 10px; }
.prop-sec.closed { margin-bottom: 1px; }
.prop-row { height: 25px; display: flex; align-items: center; }
.prop-k { width: 124px; padding-left: 15px; box-sizing: border-box; flex: none; }
.prop-k.blue { color: #2f8ef0; }
.prop-v { flex: 1; height: 20px; line-height: 18px; box-sizing: border-box; padding-left: 2px; border: 1px solid #47484b; margin-left: 14px; margin-right: 8px; font-size: 13px; }

.center { width: 1061px; flex: none; margin-left: 4px; }
.canvas { position: relative; width: 1061px; height: 390px; background: #000; overflow: hidden; }
.scene { display: block; }
.strip {
  position: absolute;
  left: 1024px;
  top: 0;
  width: 33px;
  height: 245px;
  background: #3a3c40;
  display: flex;
  flex-direction: column;
  align-items: center;
  gap: 6px;
  padding-top: 12px;
  box-sizing: border-box;
}
.strip .caret { border-top-color: #6e7073; flex: none; }
.strip-line { width: 22px; height: 1px; background: #6e7073; flex: none; }

.settings { width: 280px; flex: none; background: #25262a; }
.set-title { font-size: 13px; margin-left: 2px; }
.set-tabs { height: 26px; display: flex; gap: 4px; padding: 0 0 0 3px; border-bottom: 1px solid #1a1b1d; background: #2b2c2f; }
.set-tab { width: 60px; text-align: center; line-height: 26px; font-size: 13px; background: #2e2f33; border-radius: 3px 3px 0 0; color: #b9b9b9; }
.set-tab.on { background: #3f4145; color: #cfcfcf; }
.set-radios { height: 28px; display: flex; align-items: center; gap: 18px; padding-left: 8px; border-bottom: 1px solid #1a1b1d; background: #2b2c2f; }
.radio { display: inline-flex; align-items: center; gap: 4px; white-space: nowrap; color: #c9c9c9; }
.radio i { width: 10px; height: 10px; border: 2px solid #6c6d70; border-radius: 50%; background: #3a3b3e; display: block; flex: none; }
.radio.on i { border-color: #0d6fb8; background: radial-gradient(circle, #1a8fe6 3px, #2a2b2e 3.5px); }
.set-tree { padding-top: 3px; }
.floor { height: 24px; display: flex; align-items: center; gap: 6px; padding-left: 12px; color: #77787b; }
.floor.l2 { padding-left: 46px; }
.floor .caret { margin-right: 2px; }
.box { width: 13px; height: 13px; background: #47484b; border: 1px solid #5a5b5e; box-sizing: border-box; border-radius: 2px; flex: none; font-style: normal; font-size: 10px; line-height: 12px; text-align: center; color: #999; }

/* calculation dialog */
.dlg { flex: 1; min-width: 0; display: flex; flex-direction: column; background: linear-gradient(#5b5e5e, #535557 60px, #505254); }
.dlg-top { height: 74px; display: flex; flex: none; padding-left: 9px; box-sizing: border-box; padding-top: 8px; }
.gbox { position: relative; border: 1px solid #37383b; border-radius: 3px; box-sizing: border-box; }
.legend { position: absolute; left: 8px; top: -9px; line-height: 16px; padding-right: 1px; color: #c6c6c6; }
.kind { width: 198px; height: 48px; margin-top: 9px; display: flex; align-items: center; gap: 14px; padding-left: 10px; flex: none; }
.fields { flex: 1; margin-left: 7px; }
.field-row { display: flex; align-items: center; height: 25px; }
.field-row.second { margin-top: 8px; height: 24px; }
.f-label { width: 86px; flex: none; white-space: nowrap; color: #c4c4c4; }
.f-label.sec { margin-left: 27px; width: 67px; }
.f-input {
  height: 100%;
  box-sizing: border-box;
  background: #47484a;
  border: 1px solid #5e6062;
  border-radius: 3px;
  padding-left: 3px;
  line-height: 23px;
  color: #cfcfcf;
  position: relative;
}
.f-input.name { width: 757px; flex: none; }
.f-input.name .caret { position: absolute; right: 6px; top: 10px; }
.f-input.grow { flex: 1; margin-right: -6px; min-width: 0; }
.calc { margin-left: 9px; height: 362px; flex: none; margin-top: 8px; margin-right: -6px; padding: 8px 8px 9px; }
.calc-text { height: 100%; box-sizing: border-box; background: #47484a; border: 1px solid #5e6062; padding: 6px 4px; }
.calc-text p { margin: 0; height: 17px; line-height: 17px; white-space: nowrap; font-size: 12px; letter-spacing: 0.5px; color: #d0d0d0; }
.calc-text b { font-weight: 700; color: #e2e2e2; letter-spacing: 0; }
.manual { margin: 17px -6px 0 9px; height: 100px; flex: none; padding: 9px 8px 0; }
.manual-box { height: 50px; background: #47484a; border: 1px solid #5e6062; box-sizing: border-box; }
.manual-row { height: 26px; margin-top: 6px; display: flex; align-items: center; }
.btn {
  width: 140px;
  height: 26px;
  flex: none;
  box-sizing: border-box;
  border: 1px solid #68696b;
  border-radius: 3px;
  background: #47484a;
  text-align: center;
  line-height: 24px;
  color: #cfcfcf;
}
.btn.first { width: 100px; }
.manual-label { width: 112px; padding-left: 26px; box-sizing: border-box; flex: none; white-space: nowrap; }
.dlg-btns { display: flex; gap: 6px; margin: 7px 0 0 8px; height: 26px; flex: none; }
.dlg-sep { height: 5px; margin-top: 9px; background: #626466; flex: none; }
.dlg-bottom { flex: 1; min-height: 0; display: flex; margin-top: 11px; padding-left: 11px; gap: 5px; background: #525355; }
.qty-tree { width: 522px; flex: none; border: 1px solid #3c3d40; border-bottom: 0; box-sizing: border-box; }
.qty-tools { height: 27px; display: flex; align-items: center; gap: 20px; padding-left: 8px; background: #525355; border-bottom: 2px solid #3c3d40; }
.qt { display: inline-flex; align-items: center; gap: 6px; }
.plus-mark { color: #3a94f2; font-style: normal; width: 11px; font-size: 14px; line-height: 1; }
.qty-rows { padding-top: 3px; }
.qty-row { height: 24px; display: flex; align-items: center; gap: 7px; margin-left: 9px; white-space: nowrap; color: #c9c9c9; position: relative; }
.qty-row .arrow { margin-right: 0; }
.qty-row.sel::before { content: ""; position: absolute; left: 30px; right: 0; top: 2px; bottom: 2px; background: #36373a; }
.qty-row.sel > * { position: relative; }
.qty-row svg { margin-right: 2px; }
.view { flex: 1; min-width: 0; display: flex; flex-direction: column; }
.view-tools { height: 28px; display: flex; align-items: center; gap: 13px; padding-left: 7px; white-space: nowrap; background: #505254; flex: none; }
.vt { display: inline-flex; align-items: center; gap: 5px; }
.vt .caret { margin-left: 2px; }
.model { display: block; background: #000; }

/* report window */
.report {
  position: absolute;
  left: 353px;
  top: 548px;
  width: 1465px;
  height: 435px;
  background: #525355;
  border: 1px solid #626365;
  border-bottom: 0;
  box-sizing: border-box;
  display: flex;
  flex-direction: column;
}
.rp-title { height: 28px; flex: none; display: flex; align-items: center; justify-content: space-between; padding-left: 11px; font-size: 14px; background: linear-gradient(90deg, #47494b, #3f4140); border-bottom: 1px solid #38393b; }
.win { display: flex; align-items: center; gap: 14px; margin-right: 10px; }
.w-min { width: 10px; height: 1px; background: #a8a8a8; margin-top: 9px; }
.w-max { width: 10px; height: 10px; border: 1px solid #bcbcbc; }
.rp-tools { height: 29px; flex: none; display: flex; align-items: center; gap: 17px; padding-left: 7px; border-bottom: 2px solid #3a3b3d; box-sizing: border-box; white-space: nowrap; color: #cfcfcf; }
.rt { display: inline-flex; align-items: center; gap: 4px; }
.rt .caret { margin-left: 6px; }
.rp-search { width: 119px; height: 25px; box-sizing: border-box; margin-left: -6px; margin-right: -9px; border: 1px solid #66676a; border-radius: 3px; display: flex; align-items: center; justify-content: space-between; padding: 0 8px 0 3px; color: #7e7f82; }
.rp-body { flex: 1; min-height: 0; display: flex; }
.rp-left { width: 262px; flex: none; }
.rp-tabs { height: 30px; display: flex; align-items: flex-end; gap: 3px; padding-left: 2px; }
.rp-tab { width: 72px; height: 24px; line-height: 24px; text-align: center; color: #9fa0a2; font-size: 13px; white-space: nowrap; }
.rp-tab.on { background: #595a5c; color: #cfcfcf; border-radius: 3px 3px 0 0; margin-left: 2px; }
.rp-tree { height: 348px; margin-left: 2px; width: 258px; background: #595a5c; border: 1px solid #46474a; box-sizing: border-box; padding-top: 3px; overflow: hidden; }
.rp-sec { height: 24px; display: flex; align-items: center; gap: 6px; padding-left: 9px; white-space: nowrap; color: #c9c9c9; }
.rp-item { height: 24px; display: flex; align-items: center; gap: 6px; margin-left: 39px; width: 185px; box-sizing: border-box; padding-left: 5px; white-space: nowrap; color: #d0d0d0; }
.rp-item.sel { background: #36373a; height: 21px; margin-top: 1px; margin-bottom: 2px; }
.rp-right { flex: 1; min-width: 0; border-left: 2px solid #3c3d40; box-sizing: border-box; }
.rp-bar { height: 30px; padding: 2px 0 0 5px; display: flex; align-items: center; border-bottom: 2px solid #3c3d40; box-sizing: border-box; }
.rb-btn { height: 26px; box-sizing: border-box; border: 1px solid #45464a; border-radius: 3px; display: flex; align-items: center; justify-content: space-between; padding: 0 6px 0 4px; margin-right: 5px; background: #4a4b4e; white-space: nowrap; }
.w1 { width: 68px; }
.w2 { width: 106px; }
.w3 { width: 70px; }
.rb-link { display: inline-flex; align-items: center; gap: 5px; margin: 0 16px 0 5px; white-space: nowrap; }
.sheet { border-collapse: collapse; table-layout: fixed; width: 694px; margin: 5px 0 0 3px; font: 12px/18px "Liberation Serif", "Noto Sans CJK SC", serif; color: #111; }
.c0 { width: 14px; }
.c1 { width: 68px; }
.c2 { width: 156px; }
.c3 { width: 247px; }
.c4 { width: 76px; }
.c5 { width: 133px; }
.sheet th, .sheet td { border: 1px solid #000; background: #fff; padding: 0; height: 19px; box-sizing: border-box; overflow: hidden; white-space: nowrap; }
.sheet th { height: 37px; font: 700 13px "Noto Sans CJK SC", sans-serif; }
.sheet .rn { background: #3d3e41; border: 0; color: #bdbdbd; font: 13px/18px "Noto Sans CJK SC", sans-serif; overflow: visible; }
.sheet th.rn { background: #3d3e41; position: relative; }
.sheet th.rn i { position: absolute; left: 0; right: 0; top: 18px; height: 1px; background: #2b2c2e; }
.sheet .sec { text-align: center; font-family: "Noto Sans CJK SC", sans-serif; }
.seq { display: flex; align-items: center; }
.pl { width: 13px; height: 14px; margin-left: 2px; box-sizing: border-box; border: 1px solid #8a8a8a; border-radius: 2px; font: 11px/12px "Liberation Sans", sans-serif; text-align: center; color: #666; flex: none; }
.seq .num { flex: 1; text-align: center; }
.sheet .code { padding-left: 2px; letter-spacing: 0; }
.sheet .nm { padding-left: 2px; }
.sheet .ctr { text-align: center; }
.sheet .qty { text-align: right; padding-right: 3px; }
.marks { position: absolute; left: 0; top: 0; pointer-events: none; }
</style>
